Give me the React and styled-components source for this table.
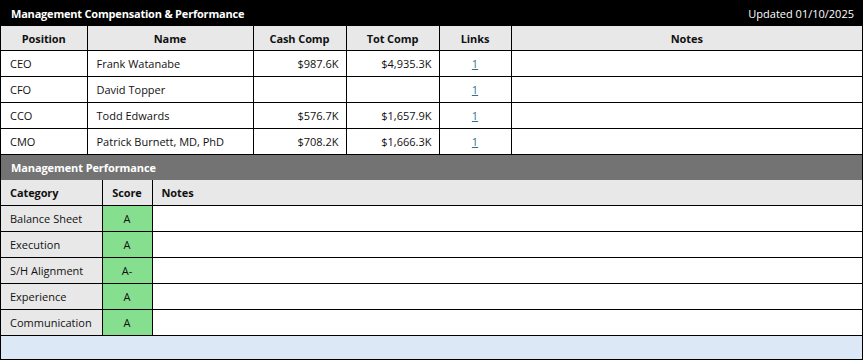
import React from "react";
import styled, { createGlobalStyle } from "styled-components";

const Global = createGlobalStyle`
  html, body { margin: 0; padding: 0; background: #fff; }
  body { font-family: "Open Sans", "Noto Sans", Arial, sans-serif; font-size: 11px; color: #111; }
`;

const Wrap = styled.div`
  width: 863px;
  border: 1px solid #000;
  border-top: none;
  box-sizing: border-box;
`;

const TitleBar = styled.div`
  display: flex;
  justify-content: space-between;
  align-items: center;
  height: 26px;
  background: #000;
  color: #fff;
  padding: 0 8px 0 10px;
  font-size: 11px;
`;

const Title = styled.span`
  font-weight: 700;
  letter-spacing: -0.2px;
`;

const Table = styled.table`
  width: 100%;
  border-collapse: collapse;
  table-layout: fixed;
`;

const Th = styled.th`
  height: ${(p) => p.$h || 24}px;
  padding: 0 9px;
  background: #e8e8e8;
  font-weight: 700;
  letter-spacing: -0.1px;
  border: 1px solid #000;
  border-top: none;
  text-align: ${(p) => p.$align || "center"};
  &:first-child { border-left: none; }
  &:last-child { border-right: none; }
`;

const Td = styled.td`
  height: 25px;
  padding: 0 ${(p) => (p.$align === "right" ? "7px" : "9px")};
  border: 1px solid #000;
  text-align: ${(p) => p.$align || "left"};
  background: ${(p) => p.$bg || "#fff"};
  white-space: nowrap;
  &:first-child { border-left: none; }
  &:last-child { border-right: none; }
`;

const Link = styled.a`
  color: #2f6f8f;
  text-decoration: underline;
`;

const SectionBar = styled.div`
  height: 25px;
  display: flex;
  align-items: center;
  padding: 0 10px;
  background: #737373;
  color: #fff;
  font-weight: 700;
  letter-spacing: -0.1px;
`;

const Footer = styled.div`
  height: 23px;
  background: #dce8f6;
`;

const mgmt = [
  ["CEO", "Frank Watanabe", "$987.6K", "$4,935.3K"],
  ["CFO", "David Topper", "", ""],
  ["CCO", "Todd Edwards", "$576.7K", "$1,657.9K"],
  ["CMO", "Patrick Burnett, MD, PhD", "$708.2K", "$1,666.3K"],
];

const perf = [
  ["Balance Sheet", "A"],
  ["Execution", "A"],
  ["S/H Alignment", "A-"],
  ["Experience", "A"],
  ["Communication", "A"],
];

export default function App() {
  return (
    <>
      <Global />
      <Wrap>
        <TitleBar>
          <Title>Management Compensation &amp; Performance</Title>
          <span>Updated 01/10/2025</span>
        </TitleBar>
        <Table>
          <colgroup>
            <col style={{ width: 86 }} />
            <col style={{ width: 166 }} />
            <col style={{ width: 93 }} />
            <col style={{ width: 93 }} />
            <col style={{ width: 72 }} />
            <col />
          </colgroup>
          <thead>
            <tr>
              <Th>Position</Th>
              <Th>Name</Th>
              <Th>Cash Comp</Th>
              <Th>Tot Comp</Th>
              <Th>Links</Th>
              <Th>Notes</Th>
            </tr>
          </thead>
          <tbody>
            {mgmt.map((r) => (
              <tr key={r[0]}>
                <Td>{r[0]}</Td>
                <Td>{r[1]}</Td>
                <Td $align="right">{r[2]}</Td>
                <Td $align="right">{r[3]}</Td>
                <Td $align="center">
                  <Link href="#">1</Link>
                </Td>
                <Td />
              </tr>
            ))}
          </tbody>
        </Table>
        <SectionBar>Management Performance</SectionBar>
        <Table>
          <colgroup>
            <col style={{ width: 101 }} />
            <col style={{ width: 50 }} />
            <col />
          </colgroup>
          <thead>
            <tr>
              <Th $align="left" $h={25}>Category</Th>
              <Th $h={25}>Score</Th>
              <Th $align="left" $h={25}>Notes</Th>
            </tr>
          </thead>
          <tbody>
            {perf.map((r) => (
              <tr key={r[0]}>
                <Td $bg="#e8e8e8">{r[0]}</Td>
                <Td $bg="#86df8e" $align="center">{r[1]}</Td>
                <Td />
              </tr>
            ))}
          </tbody>
        </Table>
        <Footer />
      </Wrap>
    </>
  );
}
